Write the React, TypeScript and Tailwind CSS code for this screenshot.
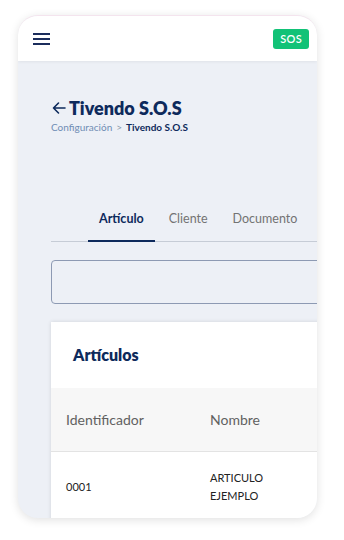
import React from 'react';

const tabs = ['Artículo', 'Cliente', 'Documento', 'Otros'];

export default function App() {
  return (
    <div className="w-[344px] h-[540px] bg-white pl-[18px] pt-[15px]" style={{ fontFamily: 'Lato, "Open Sans", sans-serif' }}>
      <div className="w-[299px] h-[503px] rounded-[20px] overflow-hidden bg-[#edf0f6] shadow-[0_2px_10px_rgba(0,0,0,0.12)] border-t border-[#f4e4ee] flex flex-col">
        {/* Top bar */}
        <div className="h-[45px] shrink-0 bg-white flex items-center justify-between pl-[15px] pr-[8px] shadow-[0_1px_3px_rgba(0,0,0,0.06)]">
          <div className="flex flex-col gap-[3px]">
            <span className="block w-[17px] h-[2px] bg-[#1b2d5c]" />
            <span className="block w-[17px] h-[2px] bg-[#1b2d5c]" />
            <span className="block w-[17px] h-[2px] bg-[#1b2d5c]" />
          </div>
          <span className="h-[20px] px-[7px] rounded-[3px] bg-[#12c277] text-white text-[11px] leading-[20px] font-semibold tracking-wide">SOS</span>
        </div>

        {/* Content */}
        <div className="w-[420px] pl-[33px] pt-[35px]">
          <div className="flex items-center gap-[2px] text-[#0d2a5c]">
            <svg width="16" height="16" viewBox="0 0 16 16" fill="none" stroke="currentColor" strokeWidth="1.6" strokeLinecap="round" strokeLinejoin="round">
              <path d="M14 8H2.5M7.5 3L2.5 8l5 5" />
            </svg>
            <h1 className="text-[18px] leading-[24px] font-extrabold">Tivendo S.O.S</h1>
          </div>
          <div className="flex items-center gap-[4px] text-[10px] leading-[14px]">
            <span className="text-[#6f8db4]">Configuración</span>
            <span className="text-[#8a98ac]">&gt;</span>
            <span className="font-bold text-[#0d2a5c]">Tivendo S.O.S</span>
          </div>

          {/* Tabs */}
          <div className="mt-[76px] border-b border-[#c6ccd6] flex pl-[37px] gap-[3px]">
            {tabs.map((t, i) => (
              <div
                key={t}
                className={
                  i === 0
                    ? 'px-[11px] pb-[12px] text-[12.5px] leading-[18px] font-bold text-[#0d2a5c] border-b-2 border-[#0d2a5c] -mb-px'
                    : 'px-[11px] pb-[12px] text-[12.5px] leading-[18px] text-[#737373]'
                }
              >
                {t}
              </div>
            ))}
          </div>

          {/* Search input */}
          <div className="mt-[18px] h-[44px] rounded-[4px] border border-[#8d9ab3]" />

          {/* Card */}
          <div className="mt-[18px] bg-white shadow-[0_0_4px_rgba(0,0,0,0.12)]">
            <div className="h-[66px] flex items-center pl-[22px]">
              <h2 className="text-[16px] font-extrabold text-[#0d2a5c]">Artículos</h2>
            </div>
            <div className="h-[64px] bg-[#f7f7f7] border-b border-[#e3e3e3] flex items-center text-[14px] text-[#616161]">
              <div className="w-[159px] pl-[15px]">Identificador</div>
              <div>Nombre</div>
            </div>
            <div className="h-[70px] flex items-center text-[11px] text-[#222]">
              <div className="w-[159px] pl-[15px]">0001</div>
              <div className="leading-[18px]">
                ARTICULO
                <br />
                EJEMPLO
              </div>
            </div>
          </div>
        </div>
      </div>
    </div>
  );
}
